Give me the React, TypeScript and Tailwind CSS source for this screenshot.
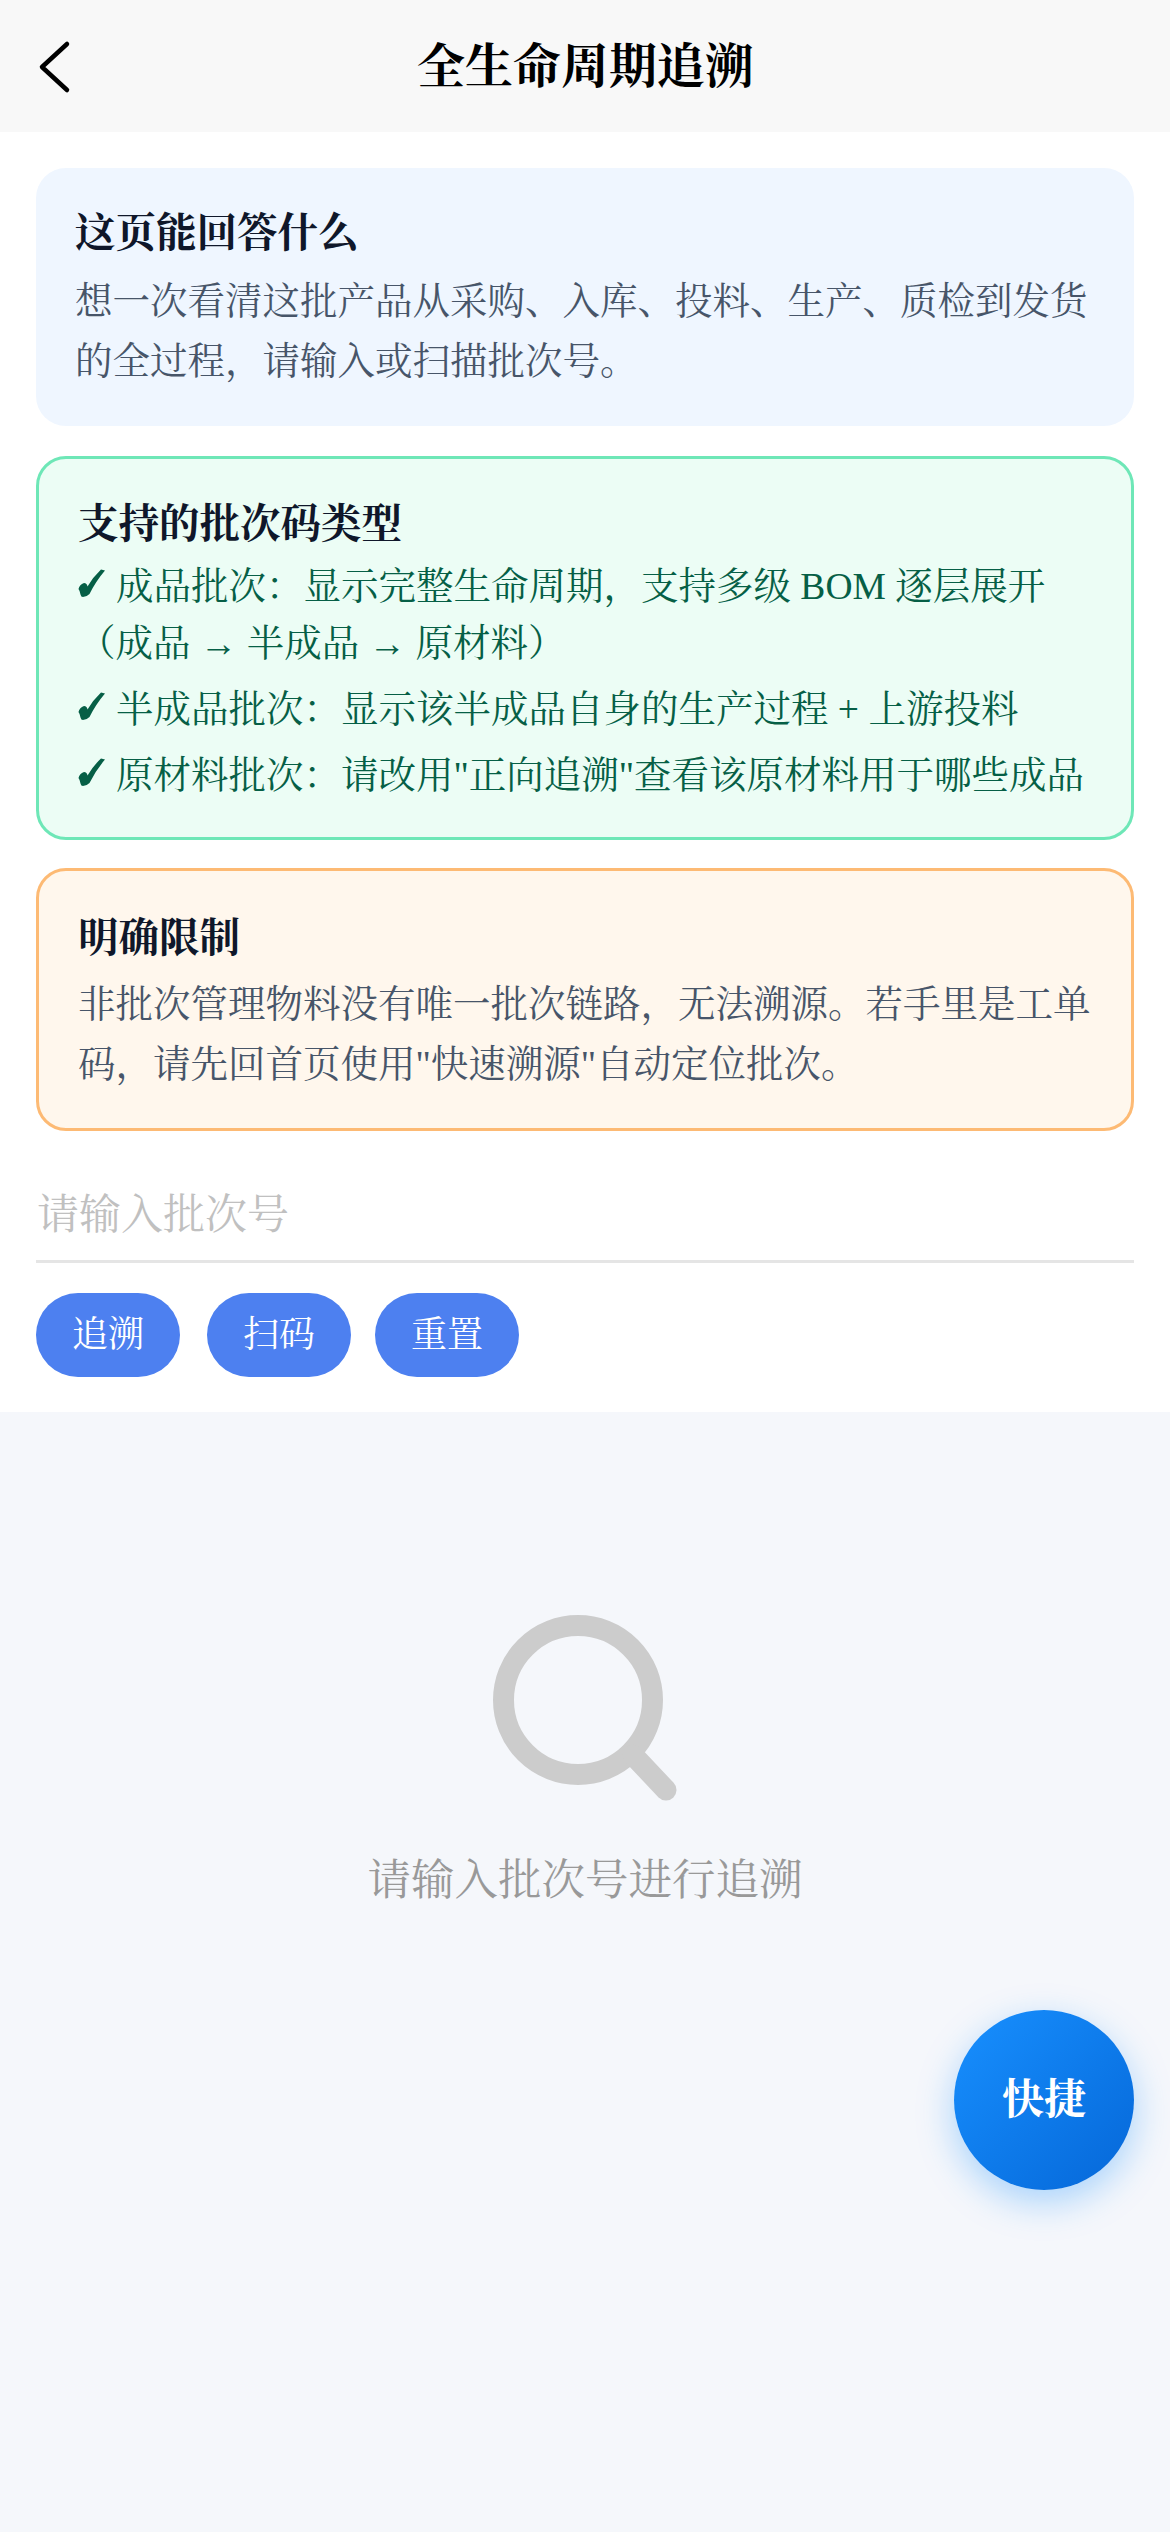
const page_font = { fontFamily: '"Liberation Serif", "Noto Serif CJK SC", "Noto Sans CJK SC", serif' };

function Check() {
  return (
    <svg className="mr-[11px] inline-block align-[2px]" width="27" height="28" viewBox="0 0 27 28" fill="#065f46">
      <path d="M0.5 20 Q1.5 15.5 6 14 Q9 14 9.5 17.5 Q15 8 23 0.5 L27 1.5 Q18 12 11.5 25 Q8.5 28 5 28 Q3 28 2.5 25.5 Q2 22 0.5 20 Z" />
    </svg>
  );
}

function BatchType({ text }: { text: string }) {
  return (
    <div className="text-[37.5px] leading-[57px] text-[#065f46]">
      <Check />{text}
    </div>
  );
}

export default function App() {
  return (
    <div className="relative min-h-[2532px] w-[1170px] bg-[#f5f7fb]" style={page_font}>
      <div className="relative flex h-[132px] items-center justify-center bg-[#f8f8f8] pt-[2px]">
        <button className="absolute left-[36px] top-[40px]">
          <svg width="36" height="54" viewBox="0 0 36 54" fill="none" stroke="#000" strokeWidth="4.5" strokeLinecap="round" strokeLinejoin="round">
            <polyline points="31,4 6,27 31,50" />
          </svg>
        </button>
        <h1 className="text-[48px] font-bold text-black">全生命周期追溯</h1>
      </div>

      <div className="bg-white px-[36px] pb-[35px] pt-[36px]">
        <div className="rounded-[30px] bg-[#eff6ff] px-[39px] pb-[34px] pt-[36px]">
          <h2 className="text-[40.5px] font-bold leading-[60px] text-[#0f172a]">这页能回答什么</h2>
          <p className="mt-[8px] text-[37.5px] leading-[60px] text-[#475569]">
            想一次看清这批产品从采购、入库、投料、生产、质检到发货的全过程，请输入或扫描批次号。
          </p>
        </div>

        <div className="mt-[30px] rounded-[30px] border-[3px] border-[#6ee7b7] bg-[#ecfdf5] px-[39px] pb-[33px] pt-[36px]">
          <h2 className="text-[40.5px] font-bold leading-[60px] text-[#0f172a]">支持的批次码类型</h2>
          <div className="mt-[3px] flex flex-col gap-[9px]">
            <BatchType text="成品批次：显示完整生命周期，支持多级 BOM 逐层展开（成品 → 半成品 → 原材料）" />
            <BatchType text={'半成品批次：显示该半成品自身的生产过程 + 上游投料'} />
            <BatchType text={'原材料批次：请改用"正向追溯"查看该原材料用于哪些成品'} />
          </div>
        </div>

        <div className="mt-[28px] rounded-[30px] border-[3px] border-[#fdba74] bg-[#fff7ed] px-[39px] pb-[33px] pt-[38px]">
          <h2 className="text-[40.5px] font-bold leading-[60px] text-[#0f172a]">明确限制</h2>
          <p className="mt-[6px] text-[37.5px] leading-[60px] text-[#475569]">
            非批次管理物料没有唯一批次链路，无法溯源。若手里是工单码，请先回首页使用"快速溯源"自动定位批次。
          </p>
        </div>

        <input
          className="mt-[39px] block h-[93px] w-full border-b-[3px] border-[#e5e5e5] px-[1px] text-[42px] outline-none placeholder:text-[#c0c0c0]"
          placeholder="请输入批次号"
        />

        <div className="mt-[30px] flex">
          <button className="h-[84px] w-[144px] rounded-[42px] bg-[#4d80f0] text-[36px] text-white">追溯</button>
          <button className="ml-[27px] h-[84px] w-[144px] rounded-[42px] bg-[#4d80f0] text-[36px] text-white">扫码</button>
          <button className="ml-[24px] h-[84px] w-[144px] rounded-[42px] bg-[#4d80f0] text-[36px] text-white">重置</button>
        </div>
      </div>

      <div className="flex flex-col items-center pt-[203px]">
        <svg width="184" height="186" viewBox="0 0 184 186" fill="none" stroke="#cccccc" strokeWidth="21" strokeLinecap="round">
          <circle cx="85" cy="85" r="74.5" />
          <line x1="140" y1="140" x2="173" y2="175" />
        </svg>
        <p className="mt-[47px] text-[43.5px] text-[#999999]">请输入批次号进行追溯</p>
      </div>

      <button className="absolute left-[954px] top-[2010px] flex h-[180px] w-[180px] items-center justify-center rounded-full bg-gradient-to-br from-[#1890ff] to-[#0667d8] text-[42px] font-bold text-white shadow-[0_12px_36px_rgba(24,144,255,0.35)]">
        快捷
      </button>
    </div>
  );
}
